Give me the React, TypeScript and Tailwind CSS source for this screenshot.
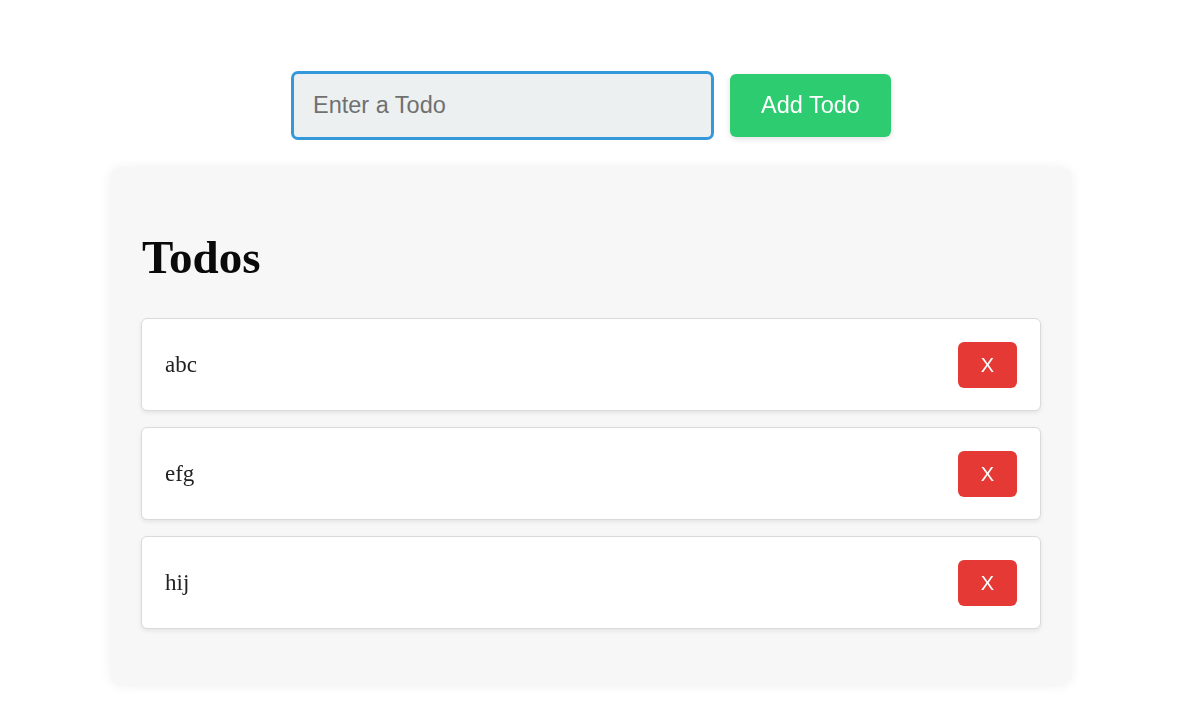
import { useState } from 'react';

export default function App() {
  const [text, setText] = useState('');
  const [todos, setTodos] = useState<string[]>(['abc', 'efg', 'hij']);

  const add = () => {
    if (!text.trim()) return;
    setTodos([...todos, text.trim()]);
    setText('');
  };

  return (
    <div className="min-h-screen bg-white">
      <div className="w-[1182px] flex flex-col items-center pt-[71px] pb-[20px]">
        {/* input row */}
        <div className="flex items-center gap-4">
          <input
            autoFocus
            value={text}
            onChange={(e) => setText(e.target.value)}
            placeholder="Enter a Todo"
            className="w-[423px] h-[69px] border-[3px] border-[#3498db] rounded-[7px] bg-[#ecf0f1] pl-[19px] text-[23.5px] text-[#333] placeholder:text-[#707070] outline-none font-['Liberation_Sans',Arial,sans-serif]"
          />
          <button
            onClick={add}
            className="w-[161px] h-[63px] rounded-[6px] bg-[#2ecc71] text-white text-[23.5px] shadow-[0_2px_6px_rgba(0,0,0,0.12)] font-['Liberation_Sans',Arial,sans-serif]"
          >
            Add Todo
          </button>
        </div>

        {/* todos panel */}
        <div className="mt-[27px] w-[962px] bg-[#f7f7f7] rounded-[12px] shadow-[0_0_12px_rgba(0,0,0,0.06)] px-[31px] pt-[64px] pb-[57px] font-['Liberation_Serif','Times_New_Roman',serif]">
          <h1 className="text-[47px] leading-[53px] font-bold text-[#0a0a0a] mb-[34px] ml-[1px]">Todos</h1>
          <ul className="flex flex-col gap-4">
            {todos.map((t, i) => (
              <li
                key={i}
                className="h-[93px] flex items-center justify-between bg-white border border-[#dadada] rounded-[6px] shadow-[0_2px_4px_rgba(0,0,0,0.08)] px-[23px]"
              >
                <span className="text-[23px] text-[#222] pt-[2px]">{t}</span>
                <button
                  onClick={() => setTodos(todos.filter((_, j) => j !== i))}
                  className="w-[59px] h-[46px] rounded-[6px] bg-[#e53935] text-white text-[20px] font-['Liberation_Sans',Arial,sans-serif]"
                >
                  X
                </button>
              </li>
            ))}
          </ul>
        </div>
      </div>
    </div>
  );
}
